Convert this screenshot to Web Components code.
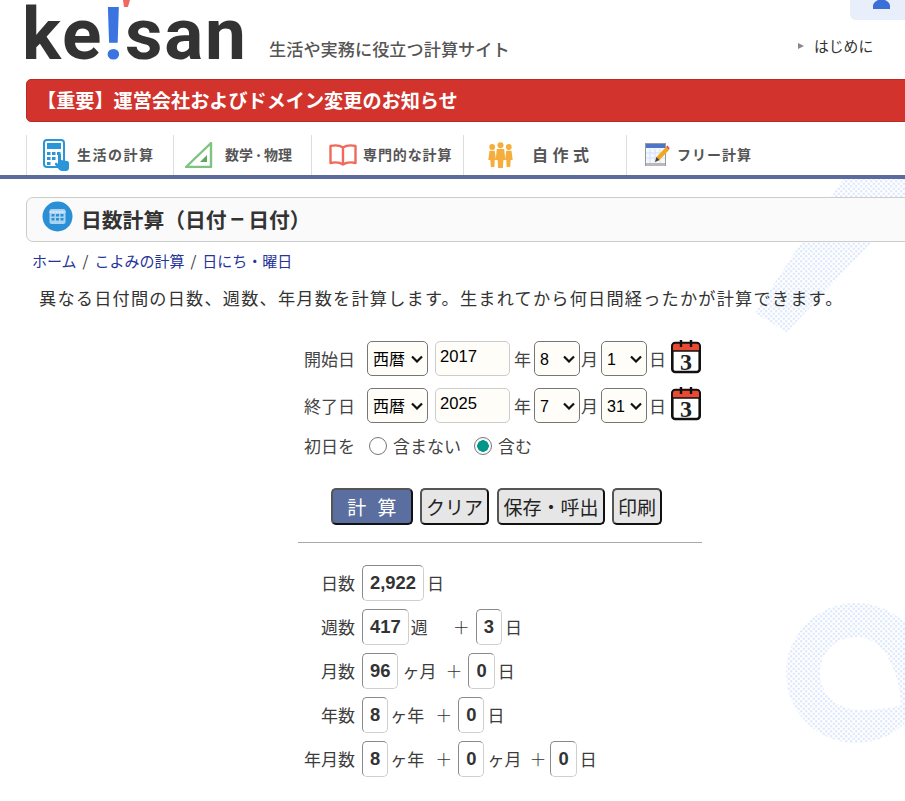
<!DOCTYPE html>
<html lang="ja"><head><meta charset="utf-8"><title>日数計算</title>
<style>
html,body{margin:0;padding:0;background:#fff;overflow:hidden}
body{font-family:"Liberation Sans","Noto Sans CJK JP",sans-serif;color:#333;width:905px;height:801px}
svg{display:block}
</style></head><body>
<k-page>
  <k-backdrop></k-backdrop>
  <k-header></k-header>
  <k-notice>【重要】運営会社およびドメイン変更のお知らせ</k-notice>
  <k-nav>
    <k-tab w="147" gap="8" pad="16" ls="1.5"><svg slot="icon" width="26" height="32" viewBox="0 0 26 32"><rect x="1" y="1" width="20" height="27" rx="3" fill="#fff" stroke="#2b95d9" stroke-width="2"/><rect x="4" y="4" width="14" height="6" fill="#2b95d9"/><g fill="#2b95d9"><rect x="4" y="13" width="3.5" height="3"/><rect x="9" y="13" width="3.5" height="3"/><rect x="14" y="13" width="3.5" height="3"/><rect x="4" y="18" width="3.5" height="3"/><rect x="9" y="18" width="3.5" height="3"/><rect x="4" y="23" width="3.5" height="3"/></g><path d="M15 16c0-1.600 3-1.600 3 0v5l6 1c1.500.3 2 1 2 2.500V29c0 1.500-1 3-3 3h-4c-1.500 0-2.500-.7-3.500-2L12 25.500c-.8-1.300.8-2.500 2-1.500l1 1z" fill="#2b95d9"/></svg>生活の計算</k-tab>
    <k-tab w="138" gap="12" pad="11" ls="0"><svg slot="icon" width="28" height="26" viewBox="0 0 28 26"><path d="M1 25 26 1v24z" fill="#fff" stroke="#7cc47f" stroke-width="2.400" stroke-linejoin="round"/><path d="M15 20l7-7v7z" fill="#5aa75e"/></svg>数学<span style="font-size:11px">・</span>物理</k-tab>
    <k-tab w="152" gap="6" pad="17" ls=".9"><svg slot="icon" width="28" height="22" viewBox="0 0 28 22"><path d="M14 3.500C11 1.500 6 1 1.500 2v17c4.500-1 9.500-.5 12.500 1.500 3-2 8-2.500 12.500-1.500V2C22 1 17 1.500 14 3.500zM14 3.500v17" fill="#fff" stroke="#ef6a5a" stroke-width="2.400" stroke-linejoin="round"/></svg>専門的な計算</k-tab>
    <k-tab w="163" gap="19" pad="24" ls="4.500" fs="16"><svg slot="icon" width="25" height="26" viewBox="0 0 25 26"><g fill="#f5ae3c"><circle cx="4.200" cy="5" r="2.900"/><circle cx="12.500" cy="3.200" r="3"/><circle cx="20.800" cy="5" r="2.900"/><path d="M1.500 8.800h5.200L8 18H6.700l-.3 7H2.800l-.5-7H.3z"/><path d="M8.800 7h7.400l1.100 11h-1.900l-.5 8h-4.800l-.5-8H7.700z"/><path d="M18.300 8.800h5.200l1.200 9.200h-2l-.5 7h-3.600l-.3-7H17z"/></g></svg>自作式</k-tab>
    <k-tab w="137" gap="7" pad="18" ls="1"><svg slot="icon" width="25" height="24" viewBox="0 0 25 24"><rect x=".5" y=".5" width="20" height="22" fill="#f4f7fd" stroke="#9a9a9a"/><rect x="1" y="1" width="19" height="4" fill="#4d76c8"/><path d="M1 20h19v3H1z" fill="#b9b9b9"/><path d="M5 6v14M10 6v14M15 6v14M1 10h19M1 15h19" stroke="#cddcf3" stroke-width=".8"/><path d="M10 19l1.500-5L21 4l3 3-9.500 10z" fill="#f0a81f"/><path d="M21 4l1.500-1.500 2 2.500L24 7z" fill="#d9574f"/><path d="M10 19l1.500-5 3 3z" fill="#444"/></svg>フリー計算</k-tab>
  </k-nav>
  <k-title>日数計算（日付<span style="margin:0 4px;font-size:23px">−</span>日付）</k-title>
  <k-crumbs><a>ホーム</a><i>/</i><a>こよみの計算</a><i>/</i><a>日にち・曜日</a></k-crumbs>
  <k-lead>異なる日付間の日数、週数、年月数を計算します。生まれてから何日間経ったかが計算できます。</k-lead>
  <k-date-row first label="開始日" year="2017" month="8" day="1"></k-date-row>
  <k-date-row label="終了日" year="2025" month="7" day="31"></k-date-row>
  <k-radio-row></k-radio-row>
  <k-actions></k-actions>
  <k-results>
    <k-row label="日数"><k-val>2,922</k-val><k-unit l="3">日</k-unit></k-row>
    <k-row label="週数"><k-val>417</k-val><k-unit l="2">週</k-unit><k-plus l="25" r="6"></k-plus><k-val>3</k-val><k-unit l="3">日</k-unit></k-row>
    <k-row label="月数"><k-val>96</k-val><k-unit l="4">ヶ月</k-unit><k-plus l="9" r="6"></k-plus><k-val>0</k-val><k-unit l="3">日</k-unit></k-row>
    <k-row label="年数"><k-val>8</k-val><k-unit l="2">ヶ年</k-unit><k-plus l="11" r="6"></k-plus><k-val>0</k-val><k-unit l="3">日</k-unit></k-row>
    <k-row label="年月数"><k-val>8</k-val><k-unit l="2">ヶ年</k-unit><k-plus l="11" r="6"></k-plus><k-val>0</k-val><k-unit l="3">ヶ月</k-unit><k-plus l="8" r="4"></k-plus><k-val>0</k-val><k-unit l="3">日</k-unit></k-row>
  </k-results>
</k-page>
<script>
function def(name, html, onInit){
  customElements.define(name, class extends HTMLElement{
    connectedCallback(){
      if(this.shadowRoot) return;
      const root=this.attachShadow({mode:'open'});
      root.innerHTML = typeof html==='function' ? html(this) : html;
      if(onInit) onInit(this,root);
    }
  });
}
const FONT='"Liberation Sans","Noto Sans CJK JP",sans-serif';
const JP='"Noto Sans CJK JP","Liberation Sans",sans-serif';
const CHEV="url(\"data:image/svg+xml,%3Csvg xmlns='http://www.w3.org/2000/svg' width='12' height='8' viewBox='0 0 12 8'%3E%3Cpath d='M1 1.500l5 5 5-5' fill='none' stroke='%23111' stroke-width='2.200'/%3E%3C/svg%3E\")";

def('k-page',`<style>:host{display:block;position:relative;width:905px;height:801px;overflow:hidden;box-sizing:border-box;padding-left:26px}</style><slot></slot>`);

def('k-backdrop',`<style>:host{position:absolute;inset:0;display:block;z-index:0;pointer-events:none}svg{display:block}</style>
<svg width="905" height="801" viewBox="0 0 905 801"><defs><pattern id="d" width="5" height="5" patternUnits="userSpaceOnUse"><circle cx="1.250" cy="1.250" r="1.300" fill="#e0eafc"/><circle cx="3.750" cy="3.750" r="1.300" fill="#e0eafc"/></pattern></defs>
<path d="M843 179H905V207L787 332L755 313z" fill="url(#d)"/>
<path fill-rule="evenodd" fill="url(#d)" d="M856 603a70 70 0 1 0 .1 0zM858 637C835 637 820 652 820 673C820 695 838 710 860 710C875 710 890 708 901 705C900 675 885 637 858 637Z"/></svg>`);

def('k-header',`<style>:host{display:block;position:relative;height:79px;margin-left:-26px;z-index:1}
.logo{position:absolute;left:22px;top:4px;font:700 73px/60px Roboto,sans-serif;color:#333;white-space:nowrap;letter-spacing:1.800px}
.logo b{color:#3a74e0;font-weight:700}
.mark{position:absolute;left:123px;top:0;width:7px;height:7px;background:#f0685e;clip-path:polygon(0 0,100% 0,70% 100%,15% 100%)}
.tag{position:absolute;left:269px;top:37px;font:500 17.200px/24px ${JP};color:#555;white-space:nowrap}
.first{position:absolute;left:814px;top:35px;font:400 14.800px/22px ${JP};color:#333}
.tri{position:absolute;left:798px;top:43px;width:0;height:0;border-left:6px solid #888;border-top:3px solid transparent;border-bottom:3px solid transparent}
.corner{position:absolute;right:0;top:0;width:55px;height:20px;background:#e8effb;border-bottom-left-radius:6px}
.corner svg{position:absolute;left:23px;top:0}
</style>
<div class="logo">ke<b>!</b>san</div><div class="mark"></div>
<div class="tag">生活や実務に役立つ計算サイト</div>
<div class="tri"></div><div class="first">はじめに</div>
<div class="corner"><svg width="17" height="9" viewBox="0 0 17 9"><path d="M0 9V6c0-3 3-5 5-6h7c2 1 5 3 5 6v3z" fill="#3a6fd8"/></svg></div>`);

def('k-notice',`<style>:host{display:block;position:relative;z-index:1;box-sizing:border-box;width:900px;height:43px;background:#d2342d;border:1px solid #b82a24;border-radius:5px;color:#fff;font:700 19.150px/40px ${JP};padding-left:10px;white-space:nowrap}</style><slot></slot>`);

def('k-nav',`<style>:host{display:flex;position:relative;z-index:1;margin:13px 0 0 -26px;padding-left:26px;height:40px;border-bottom:4px solid #5b6b9d}</style><slot></slot>`);

def('k-tab',t=>`<style>:host{display:flex;align-items:center;box-sizing:border-box;width:${t.getAttribute('w')}px;height:40px;padding-left:${t.getAttribute('pad')}px;gap:${t.getAttribute('gap')}px;border-left:1px solid #ddd;font:700 ${t.getAttribute('fs')||14}px/20px ${JP};color:#555;letter-spacing:${t.getAttribute('ls')}px;white-space:nowrap}
::slotted(svg){flex:none}.t{position:relative;top:-1px}</style><slot name="icon"></slot><span class="t"><slot></slot></span>`);

def('k-title',`<style>:host{display:flex;align-items:center;position:relative;z-index:1;box-sizing:border-box;width:900px;height:45px;margin-top:18px;background:#fafafa;border:1px solid #ccc;border-radius:7px;padding-left:15px;gap:8px;font:700 20.800px/30px ${JP};color:#333;white-space:nowrap}
svg{display:block;margin-top:-6px}span{position:relative;top:-1px}</style>
<svg width="31" height="31" viewBox="0 0 31 31"><circle cx="15.500" cy="15.500" r="15" fill="#2b8fd6"/><rect x="7.500" y="8" width="16" height="15" rx="2" fill="#a9d3f0"/><path d="M7.500 11h16" stroke="#e3f1fb" stroke-width="1.500" stroke-dasharray="2 1"/><g fill="#2b8fd6"><rect x="9.500" y="13" width="3" height="2.500"/><rect x="14" y="13" width="3" height="2.500"/><rect x="18.500" y="13" width="3" height="2.500"/><rect x="9.500" y="17" width="3" height="2.500"/><rect x="14" y="17" width="3" height="2.500"/><rect x="18.500" y="17" width="3" height="2.500"/></g></svg><span><slot></slot></span>`);

def('k-crumbs',`<style>:host{display:flex;position:relative;z-index:1;height:20px;margin:9px 0 0 6px;font:400 15px/20px ${JP};color:#333;white-space:nowrap}
::slotted(a){color:#26349a}
::slotted(i){font-style:normal;margin:0 6px}</style><slot></slot>`);

def('k-lead',`<style>:host{display:block;position:relative;z-index:1;height:26px;margin:14px 0 0 13px;font:400 17.200px/26px ${JP};letter-spacing:1.190px;color:#333;white-space:nowrap}</style><slot></slot>`);

const rowCss=`:host{display:flex;align-items:center;position:relative;z-index:1;margin-left:270px;font:400 17px/24px ${JP};color:#444;white-space:nowrap}
.lab{width:59px;text-align:right;flex:none}`;
const ctrl=`box-sizing:border-box;height:35px;font:400 16px ${FONT};color:#000;background-color:#fffdf8;`;
const opts=(from,to,sel)=>{let s='';for(let i=from;i<=to;i++)s+=`<option${i==sel?' selected':''}>${i}</option>`;return s};
def('k-date-row',t=>{
  const y=t.getAttribute('year'),m=t.getAttribute('month'),d=t.getAttribute('day');
  return `<style>${rowCss}:host{height:35px;margin-top:${t.hasAttribute('first')?30:12}px}
  select{${ctrl}border:1px solid #767676;border-radius:5px;padding:1px 0 0 5px;flex:none;outline:0;appearance:none;-webkit-appearance:none;background-image:${CHEV};background-repeat:no-repeat;background-position:right 4px center}
  input{${ctrl}font-size:16.600px;width:75px;border:1px solid #ccc;border-radius:5px;padding:0 4px 3px;margin:0 4px 0 7px;outline:0}
  .era{width:61px;margin-left:12px}.n{width:46px}
  .cal{margin-left:5px;margin-top:-4px}</style>
  <span class="lab">${t.getAttribute('label')}</span>
  <select class="era"><option selected>西暦</option><option>令和</option></select>
  <input value="${y}"><span>年</span>
  <select class="n" style="margin-left:3px">${opts(1,12,m)}</select><span style="margin:0 3px 0 1px">月</span>
  <select class="n">${opts(1,31,d)}</select><span style="margin:0 0 0 2px">日</span>
  <k-cal class="cal"></k-cal>`;
});
def('k-cal',`<style>:host{display:block;flex:none;width:30px;height:35px}svg{display:block}text{font:700 24px "Liberation Serif",serif;fill:#222}</style>
<svg width="30" height="35" viewBox="0 0 30 35"><rect x="1.300" y="4" width="27.400" height="29" rx="3" fill="#fff" stroke="#111" stroke-width="2.600"/><path d="M1.300 7a3 3 0 0 1 3-3h21.400a3 3 0 0 1 3 3v5h-27.400z" fill="#ea4a32" stroke="#111" stroke-width="1.400"/><path d="M10 1v7M20 1v7" stroke="#111" stroke-width="2.400"/><text x="15" y="30.500" text-anchor="middle">3</text></svg>`);

def('k-radio-row',`<style>${rowCss}:host{height:23px;margin-top:11px}
label{display:flex;align-items:center}
.r{box-sizing:border-box;width:18px;height:18px;border-radius:50%;border:1px solid #767676;background:#fff;margin:0 6px 0 0;appearance:none;-webkit-appearance:none;flex:none}
.r:checked{background:radial-gradient(circle,#009688 0 5.500px,#fff 6px);}
</style><span class="lab">初日を</span>
<label style="margin-left:14px"><input class="r" type="radio" name="f">含まない</label>
<label style="margin-left:13px"><input class="r" type="radio" name="f" checked>含む</label>`);

def('k-actions',`<style>:host{display:block;position:relative;z-index:1;margin-top:31px;margin-left:272px;width:404px}
.bs{display:flex;height:37px;margin-left:33px}
button{box-sizing:border-box;height:37px;padding:0;font:400 19px/1 ${JP};color:#222;background:#e6e6e6;border:2px solid;border-color:#555 #111 #111 #555;border-radius:5px;white-space:nowrap}
.go{width:82px;background:#5b6ea0;color:#fff;word-spacing:7px}
hr{margin:17px 0 0;border:0;height:1px;background:#aaa}</style>
<div class="bs"><button class="go">計&nbsp;算</button><button style="width:69px;margin-left:7px">クリア</button><button style="width:108px;margin-left:8px">保存・呼出</button><button style="width:50px;margin-left:7px">印刷</button></div><hr>`);

def('k-results',`<style>:host{display:flex;flex-direction:column;gap:8px;position:relative;z-index:1;margin-top:22px;margin-left:260px}</style><slot></slot>`);
def('k-row',t=>`<style>:host{display:flex;align-items:center;height:36px;font:400 17px/24px ${JP};color:#3c3c3c;white-space:nowrap}
.lab{width:69px;text-align:right;margin-right:7px;flex:none}</style><span class="lab">${t.getAttribute('label')}</span><slot></slot>`);
def('k-val',`<style>:host{display:block;box-sizing:border-box;height:36px;padding:0 7px;min-width:26px;border:1px solid;border-color:#8a8a8a #cfcfcf #cfcfcf #8a8a8a;border-radius:5px;background:#fff;font:700 18.400px/34px ${FONT};color:#333;text-align:center}</style><slot></slot>`);
def('k-unit',t=>`<style>:host{display:block;margin-left:${t.getAttribute('l')}px}</style><slot></slot>`);
def('k-plus',t=>`<style>:host{display:block;margin:0 ${t.getAttribute('r')}px 0 ${t.getAttribute('l')}px;color:#333;font-weight:300}</style>＋`);
</script>
</body></html>
